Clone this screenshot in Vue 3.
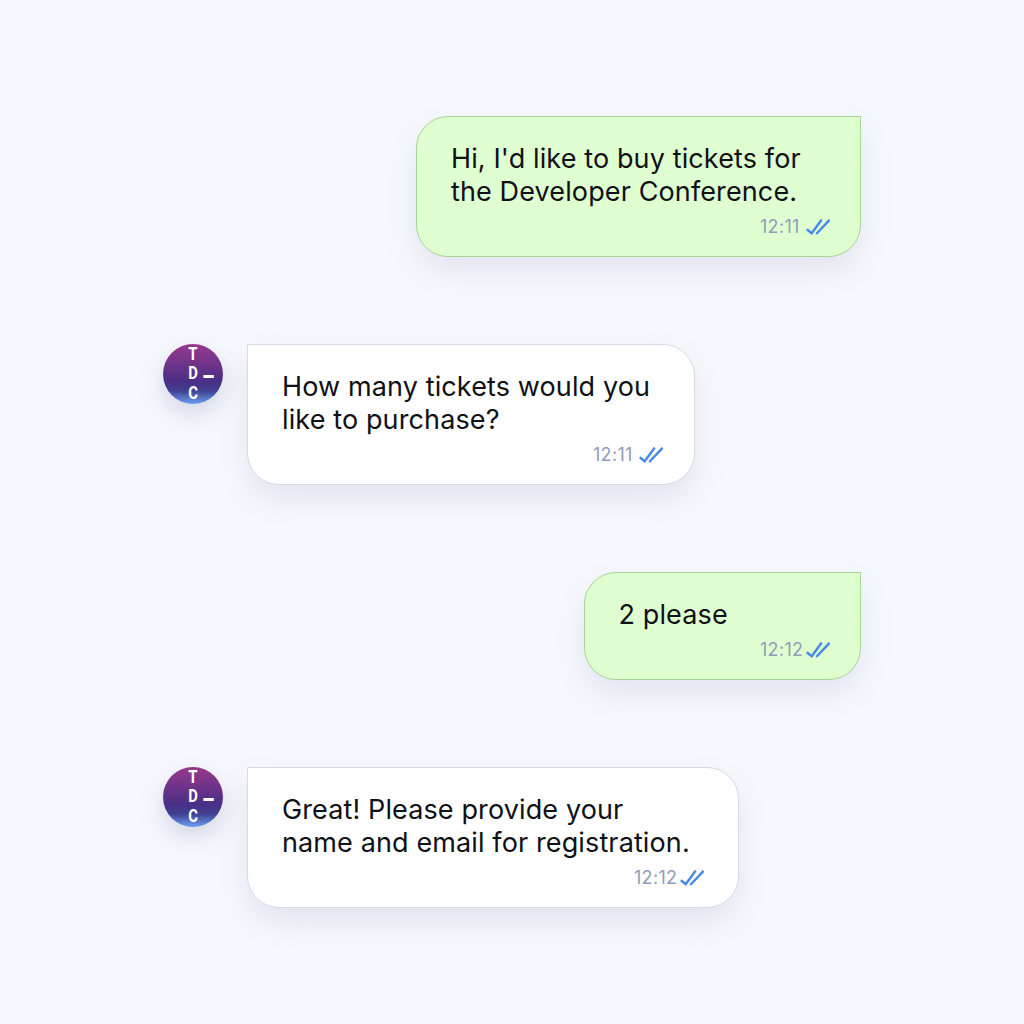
<script setup>
const messages = [
  { id: 1, mine: true, width: 445, lines: ["Hi, I'd like to buy tickets for", 'the Developer Conference.'], time: '12:11', metaRight: 30 },
  { id: 2, mine: false, width: 448, lines: ['How many tickets would you', 'like to purchase?'], time: '12:11', metaRight: 31 },
  { id: 3, mine: true, width: 277.5, lines: ['2 please'], time: '12:12', metaRight: 30 },
  { id: 4, mine: false, width: 492, lines: ['Great! Please provide your', 'name and email for registration.'], time: '12:12', metaRight: 34 },
]
</script>

<template>
  <main class="chat">
    <div v-for="m in messages" :key="m.id" class="row" :class="{ mine: m.mine }">
      <div v-if="!m.mine" class="avatar">
        <span>T</span>
        <span>D<i class="dash"></i></span>
        <span>C</span>
      </div>
      <div class="bubble" :style="{ width: m.width + 'px', paddingRight: m.metaRight + 'px' }">
        <p v-for="line in m.lines" :key="line">{{ line }}</p>
        <div class="meta">
          <span class="time">{{ m.time }}</span>
          <svg width="24" height="16" viewBox="0 0 24 16" fill="none" stroke="#4589e6" stroke-width="2.4">
            <path d="M0.8 10.3 L5.7 14.2 L15.7 0.6" />
            <path d="M10 13.8 L11 14.2 L23.6 0.8" />
          </svg>
        </div>
      </div>
    </div>
  </main>
</template>

<style scoped>
.chat {
  width: 1024px;
  height: 1024px;
  box-sizing: border-box;
  padding: 116px 163px 0;
  background: #f8f9fe;
  display: flex;
  flex-direction: column;
  gap: 87px;
  font-family: Inter, "Liberation Sans", sans-serif;
}
.row {
  display: flex;
  align-items: flex-start;
  gap: 24px;
}
.row.mine {
  justify-content: flex-end;
}
.avatar {
  width: 60px;
  height: 60px;
  border-radius: 50%;
  background: linear-gradient(180deg, #98398c 0%, #4a2f86 62%, #3f3f90 78%, #6aa0f0 100%);
  box-shadow: 0 10px 24px rgba(60, 70, 120, 0.2);
  color: #fff;
  font-family: Roboto, "Liberation Sans", sans-serif;
  font-size: 18.5px;
  font-weight: 700;
  line-height: 19.5px;
  display: flex;
  flex-direction: column;
  align-items: center;
  justify-content: center;
}
.avatar span {
  position: relative;
  display: block;
  transform: scaleX(0.8);
}
.dash {
  position: absolute;
  left: 19px;
  top: 11px;
  width: 12.5px;
  height: 2.5px;
  background: #fff;
}
.bubble {
  box-sizing: border-box;
  padding: 25px 30px 17px 34px;
  background: #fff;
  border: 1px solid #d3dbe9;
  border-radius: 0 32px 32px 32px;
  box-shadow: 0 14px 32px rgba(90, 100, 140, 0.14);
  color: #0f1116;
  font-size: 27px;
  font-weight: 380;
  letter-spacing: 0.12px;
  line-height: 33px;
}
.mine .bubble {
  background: #e0ffd0;
  border-color: #a6d598;
  border-radius: 32px 0 32px 32px;
}
p {
  margin: 0;
  white-space: nowrap;
}
.meta {
  display: flex;
  justify-content: flex-end;
  align-items: center;
  margin-top: 7px;
  color: #8f9dba;
  font-size: 18px;
  font-weight: 400;
  letter-spacing: 0.3px;
  line-height: 24px;
}
.time {
  width: 46px;
}
</style>
